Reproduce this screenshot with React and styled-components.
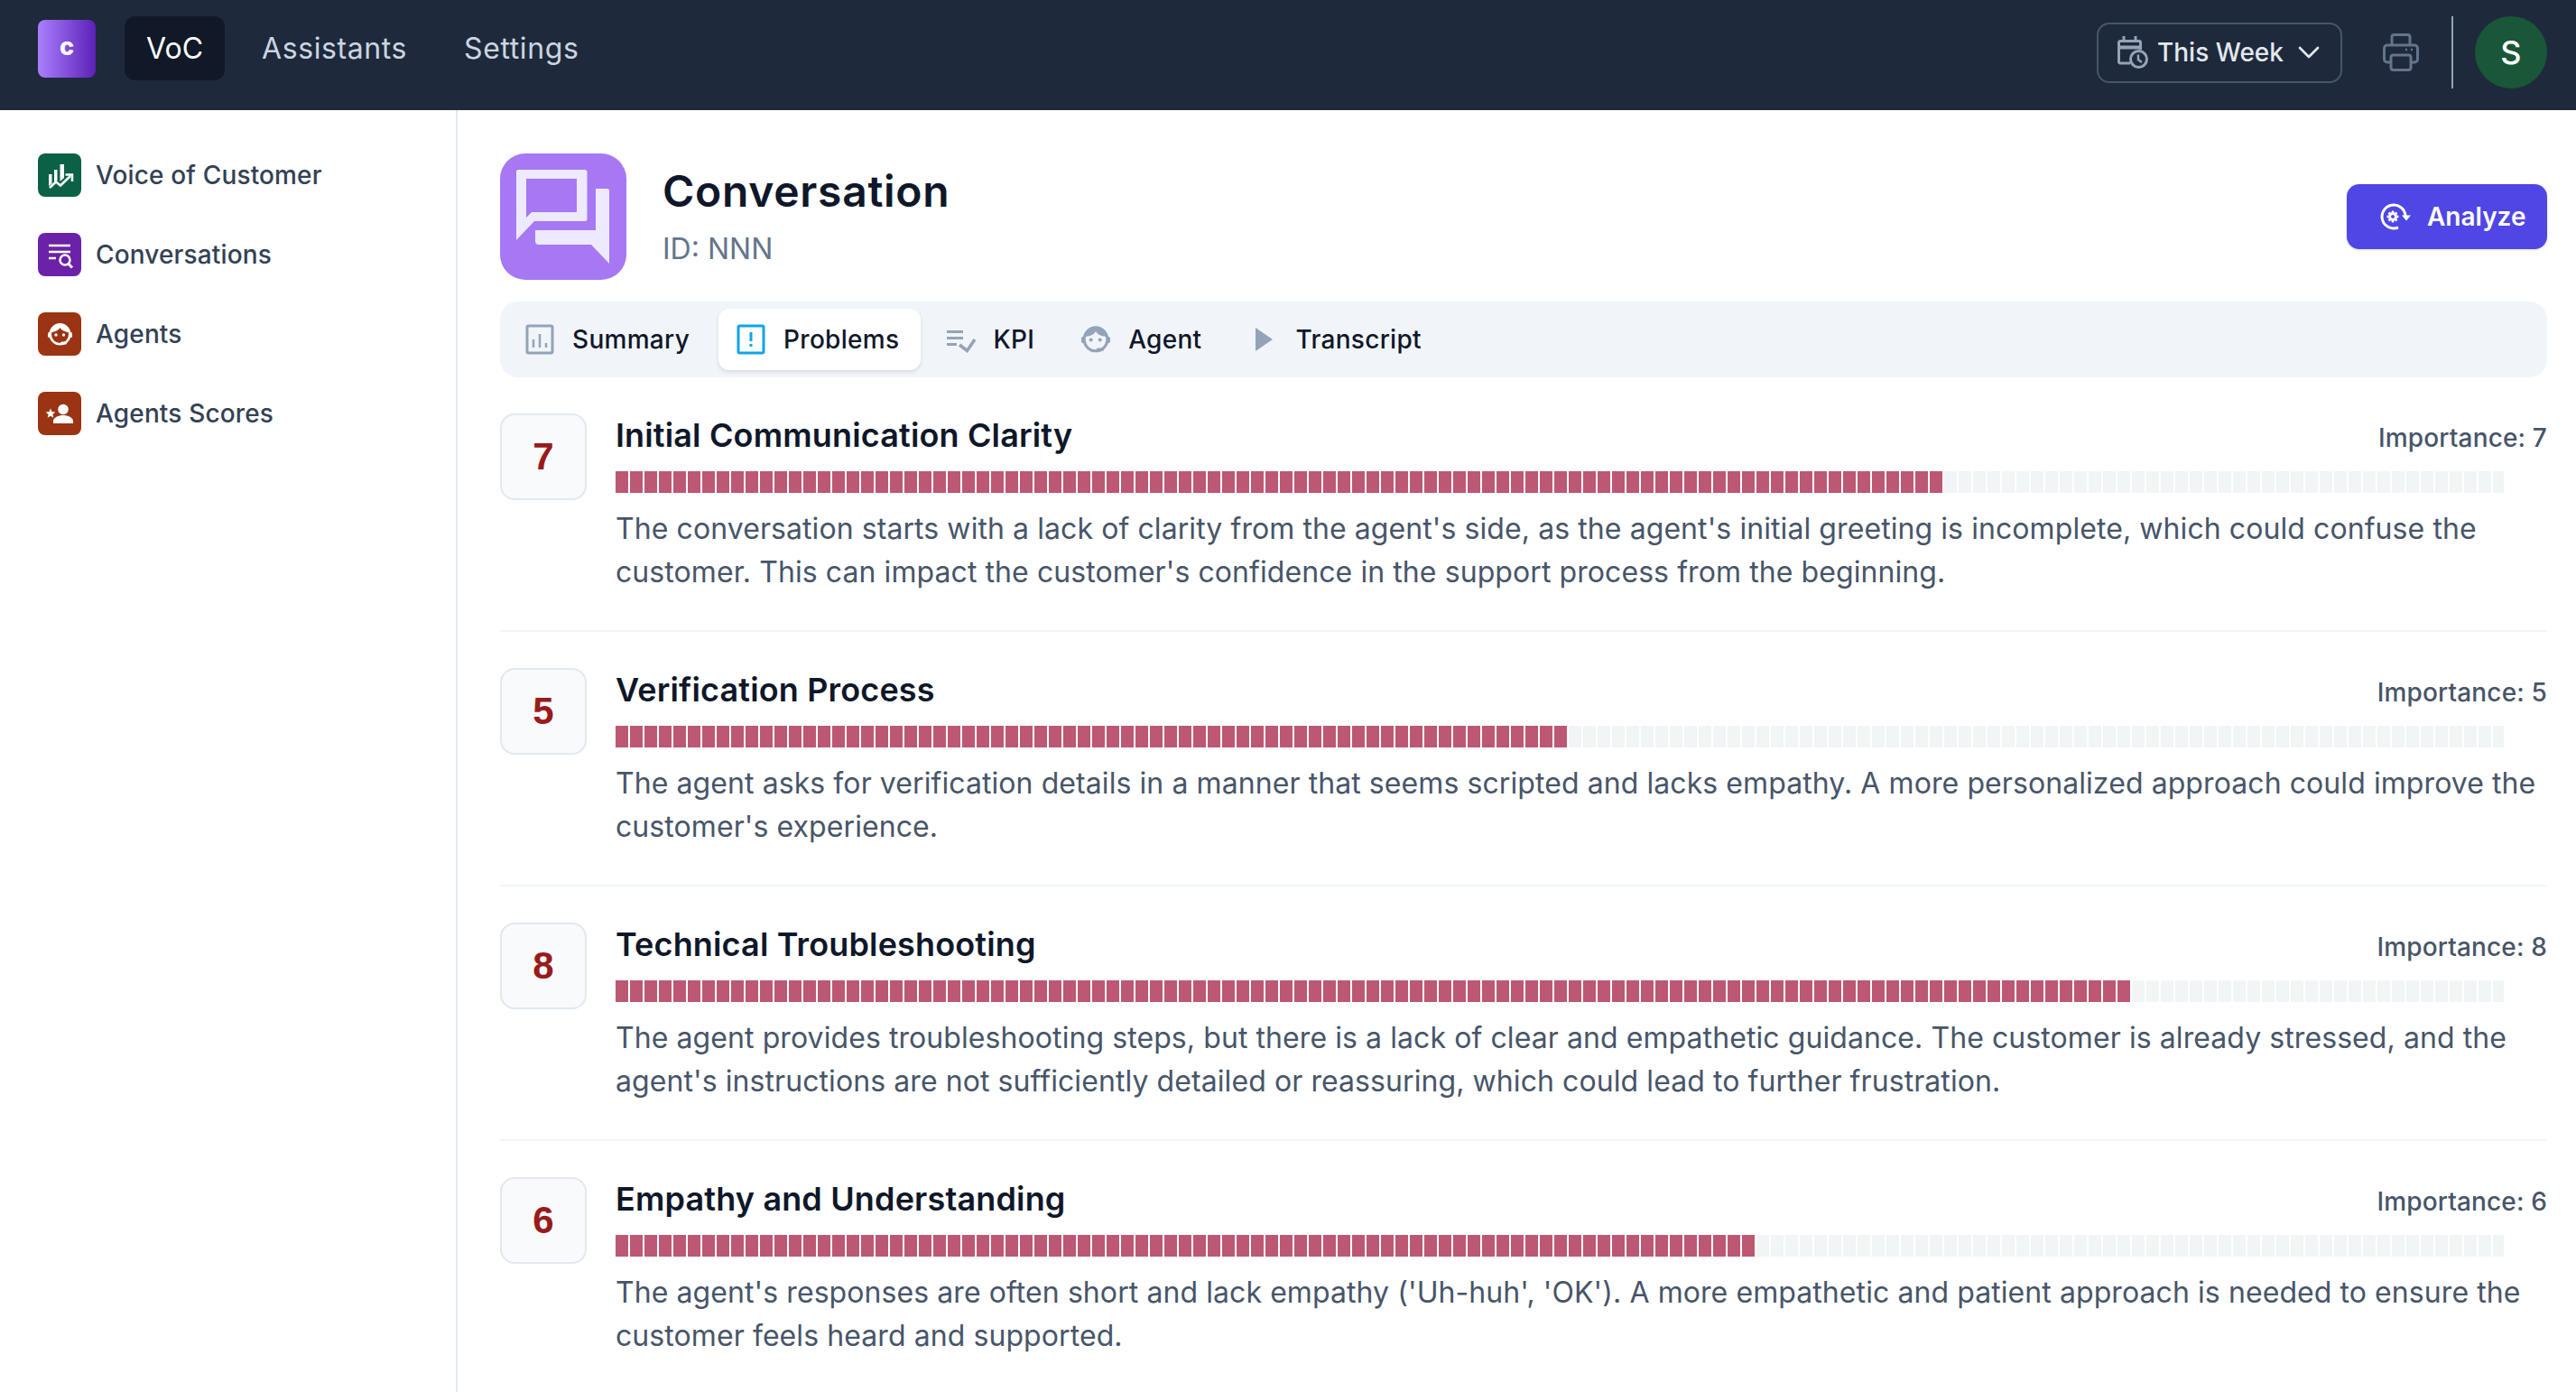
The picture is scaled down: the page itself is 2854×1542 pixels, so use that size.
import styled, { createGlobalStyle } from 'styled-components';
import { ChevronDown } from 'lucide-react';

const SEGMENT = 16;
const METER_WIDTH = 2092;

const GlobalStyle = createGlobalStyle`
  html, body {
    margin: 0;
    height: 100%;
    overflow: hidden;
    background: #fff;
    font-family: Inter, "Noto Sans", sans-serif;
  }
  * {
    box-sizing: border-box;
  }
`;

const Page = styled.div`
  display: flex;
  flex-direction: column;
  height: 100vh;
  overflow: hidden;
`;

const TopBar = styled.header`
  display: flex;
  justify-content: space-between;
  align-items: flex-start;
  flex: none;
  height: 122px;
  padding: 18px 32px 0 42px;
  background: #1e293b;
`;

const TopLeft = styled.div`
  display: flex;
  align-items: center;
  height: 71px;
`;

const Logo = styled.div`
  display: flex;
  align-items: center;
  justify-content: center;
  width: 64px;
  height: 64px;
  margin-right: 32px;
  padding-bottom: 5px;
  border-radius: 8px;
  background: linear-gradient(90deg, #a97ffd, #5b21b6);
  color: #fff;
  font-size: 27px;
  font-weight: 800;
`;

const NavItem = styled.a`
  display: flex;
  align-items: center;
  height: 71px;
  margin-right: ${(p) => (p.$active ? '17px' : '15px')};
  padding: 0 24px;
  border-radius: 12px;
  background: ${(p) => (p.$active ? '#111827' : 'transparent')};
  color: ${(p) => (p.$active ? '#fff' : '#cbd5e1')};
  font-size: 32px;
  letter-spacing: ${(p) => (p.$active ? '0' : '0.6px')};
`;

const TopRight = styled.div`
  display: flex;
  align-items: center;
  height: 80px;
`;

const RangeButton = styled.button`
  display: flex;
  align-items: center;
  width: 272px;
  height: 67px;
  padding: 0 0 0 21px;
  border: 2px solid #475569;
  border-radius: 14px;
  background: transparent;
  color: #e2e8f0;
  font-family: inherit;
  font-size: 28px;
  font-weight: 500;

  span {
    margin: 0 8px 0 10px;
  }
`;

const PrintIcon = styled.svg`
  width: 40px;
  height: 42px;
  margin: 0 36px 0 45px;
`;

const Divider = styled.div`
  width: 2px;
  height: 80px;
  margin-right: 24px;
  background: #94a3b8;
`;

const Avatar = styled.div`
  display: flex;
  align-items: center;
  justify-content: center;
  width: 80px;
  height: 80px;
  border-radius: 50%;
  background: #1a5638;
  color: #fff;
  font-size: 36px;
  font-weight: 500;
`;

const Body = styled.div`
  display: flex;
  flex: 1;
  min-height: 0;
`;

const Sidebar = styled.aside`
  display: flex;
  flex-direction: column;
  gap: 40px;
  flex: none;
  width: 507px;
  padding: 48px 0 0 42px;
  border-right: 2px solid #e2e8f0;
`;

const SideItem = styled.a`
  display: flex;
  align-items: center;
  gap: 16px;
  height: 48px;
  color: #334155;
  font-size: 28px;
  font-weight: 550;
  letter-spacing: 0.15px;
`;

const SideIcon = styled.div`
  display: flex;
  width: 48px;
  height: 48px;
  border-radius: 8px;
  background: ${(p) => p.$bg};
  color: #fff;
`;

const Main = styled.main`
  flex: 1;
  min-width: 0;
  padding: 48px 32px 0 47px;
`;

const TitleRow = styled.div`
  display: flex;
  align-items: flex-start;
  gap: 40px;
  height: 140px;
`;

const BigIcon = styled.div`
  flex: none;
  width: 140px;
  height: 140px;
  border-radius: 28px;
  background: #a678f3;
  color: #ede9fe;
`;

const TitleBlock = styled.div`
  flex: 1;
  padding-top: 12px;
`;

const Title = styled.h1`
  margin: 0;
  color: #0f172a;
  font-size: 48px;
  font-weight: 600;
  line-height: 60px;
  letter-spacing: 0.7px;
`;

const SubTitle = styled.div`
  margin-top: 15px;
  color: #64748b;
  font-size: 32px;
  line-height: 38px;
`;

const AnalyzeButton = styled.button`
  display: flex;
  align-items: center;
  gap: 17px;
  width: 222px;
  height: 72px;
  margin-top: 34px;
  padding: 0 0 0 36px;
  border: 0;
  border-radius: 14px;
  background: #4f46e5;
  box-shadow: 0 1px 3px rgba(15, 23, 42, 0.15);
  color: #fff;
  font-family: inherit;
  font-size: 28px;
  font-weight: 600;
`;

const Tabs = styled.div`
  display: flex;
  gap: 8px;
  height: 84px;
  margin-top: 24px;
  padding: 8px;
  border-radius: 20px;
  background: #f1f5f9;
`;

const Tab = styled.div`
  display: flex;
  align-items: center;
  gap: 20px;
  height: 68px;
  padding: 0 24px 0 20px;
  border-radius: 12px;
  background: ${(p) => (p.$active ? '#fff' : 'transparent')};
  box-shadow: ${(p) => (p.$active ? '0 2px 4px rgba(15, 23, 42, 0.12)' : 'none')};
  color: #0f172a;
  font-size: 28px;
  font-weight: 550;
  letter-spacing: 0.3px;
`;

const TabIcon = styled.svg`
  flex: none;
  width: 32px;
  height: 36px;
  overflow: visible;
  color: ${(p) => (p.$active ? '#0ea5e9' : '#94a3b8')};
`;

const Problem = styled.section`
  display: flex;
  gap: 32px;
  padding: 40px 0;
  border-bottom: 2px solid #f1f5f9;
`;

const Score = styled.div`
  display: flex;
  align-items: center;
  justify-content: center;
  flex: none;
  width: 96px;
  height: 96px;
  border: 2px solid #e2e8f0;
  border-radius: 16px;
  background: #f8fafc;
  color: #991b1b;
  font-family: "Liberation Sans", sans-serif;
  font-size: 42px;
  font-weight: 700;
`;

const ProblemBody = styled.div`
  flex: 1;
  min-width: 0;
`;

const ProblemHead = styled.div`
  display: flex;
  justify-content: space-between;
  align-items: center;
  height: 48px;
`;

const ProblemTitle = styled.h2`
  margin: 0;
  color: #0f172a;
  font-size: 36px;
  font-weight: 600;
  letter-spacing: 0.15px;
`;

const Importance = styled.div`
  padding-top: 6px;
  color: #475569;
  font-size: 28px;
  font-weight: 550;
  letter-spacing: 0.15px;
`;

const Meter = styled.div`
  width: ${METER_WIDTH}px;
  height: 24px;
  margin-top: 16px;
  background: repeating-linear-gradient(90deg, #f1f5f6 0 14px, transparent 14px ${SEGMENT}px);
`;

// the fill always stops on a whole segment
const MeterFill = styled.div`
  width: ${(p) => Math.ceil((METER_WIDTH * p.$value) / 10 / SEGMENT) * SEGMENT - 2}px;
  height: 100%;
  background: repeating-linear-gradient(90deg, #bc5873 0 14px, transparent 14px ${SEGMENT}px);
`;

const Description = styled.p`
  margin: 16px 0 0;
  color: #475569;
  font-size: 32px;
  line-height: 48px;
  letter-spacing: 0.08px;
`;

const problems = [
  {
    score: 7,
    title: 'Initial Communication Clarity',
    text: "The conversation starts with a lack of clarity from the agent's side, as the agent's initial greeting is incomplete, which could confuse the customer. This can impact the customer's confidence in the support process from the beginning.",
  },
  {
    score: 5,
    title: 'Verification Process',
    text: "The agent asks for verification details in a manner that seems scripted and lacks empathy. A more personalized approach could improve the customer's experience.",
  },
  {
    score: 8,
    title: 'Technical Troubleshooting',
    text: "The agent provides troubleshooting steps, but there is a lack of clear and empathetic guidance. The customer is already stressed, and the agent's instructions are not sufficiently detailed or reassuring, which could lead to further frustration.",
  },
  {
    score: 6,
    title: 'Empathy and Understanding',
    text: "The agent's responses are often short and lack empathy ('Uh-huh', 'OK'). A more empathetic and patient approach is needed to ensure the customer feels heard and supported.",
  },
];

const AgentFace = () => (
  <>
    <circle cx="24.500" cy="24.500" r="10.800" fill="none" stroke="currentColor" strokeWidth="2.600" />
    <path
      fill="currentColor"
      d="M14 22c0-6 5-10 10.500-10S35 16 35 22c-4 0-8.500-1.500-10.500-5-2 3.500-6.500 5-10.500 5z"
    />
    <rect x="11" y="22" width="3" height="6" rx="1.500" fill="currentColor" />
    <rect x="35" y="22" width="3" height="6" rx="1.500" fill="currentColor" />
    <circle cx="20" cy="25" r="1.700" fill="currentColor" />
    <circle cx="28.500" cy="25" r="1.700" fill="currentColor" />
    <rect x="25" y="32.500" width="7" height="3" rx="1.500" fill="currentColor" />
  </>
);

function App() {
  return (
    <Page>
      <GlobalStyle />
      <TopBar>
        <TopLeft>
          <Logo>c</Logo>
          <NavItem $active>VoC</NavItem>
          <NavItem>Assistants</NavItem>
          <NavItem>Settings</NavItem>
        </TopLeft>
        <TopRight>
          <RangeButton>
            <svg width="34" height="38" viewBox="0 0 34 38" fill="none" stroke="#94a3b8" strokeWidth="3">
              <path d="M14 31H3a1.500 1.500 0 0 1-1.500-1.500V8A1.500 1.500 0 0 1 3 6.500h21A1.500 1.500 0 0 1 25.500 8v8" />
              <path d="M2 13.500h23" strokeWidth="4" />
              <path d="M7 1v6M20 1v6" />
              <circle cx="23.500" cy="26.500" r="9" fill="#1e293b" />
              <path d="M23 21.500v5.500l4 3" strokeWidth="2.500" />
            </svg>
            <span>This Week</span>
            <ChevronDown size={40} color="#e2e8f0" strokeWidth={1.6} />
          </RangeButton>
          <PrintIcon viewBox="0 0 40 42" fill="none" stroke="#64748b" strokeWidth="3">
            <path d="M10 13V4a2.500 2.500 0 0 1 2.500-2.500h15A2.500 2.500 0 0 1 30 4v9" />
            <path d="M9 32H5a3.500 3.500 0 0 1-3.500-3.500v-12A3.500 3.500 0 0 1 5 13h30a3.500 3.500 0 0 1 3.500 3.500v12A3.500 3.500 0 0 1 35 32h-4" />
            <rect x="9" y="24" width="22" height="16.500" rx="2.500" />
            <path d="M25 18h2M31 18h2" strokeWidth="2.500" />
          </PrintIcon>
          <Divider />
          <Avatar>S</Avatar>
        </TopRight>
      </TopBar>
      <Body>
        <Sidebar>
          <SideItem>
            <SideIcon $bg="#0b6146">
              <svg viewBox="0 0 48 48" fill="none">
                <path fill="#fff" d="M12 23h3.500v10.500L12 36zM18 18h3.500v12L18 32zM24.500 12H29v15l-4.500 4z" />
                <path d="M13 38l7-6.500 5 4L36 25" stroke="#fff" strokeWidth="2.500" />
                <path d="M30.500 23.500H38V31" stroke="#fff" strokeWidth="2.500" />
              </svg>
            </SideIcon>
            Voice of Customer
          </SideItem>
          <SideItem>
            <SideIcon $bg="#6b21a8">
              <svg viewBox="0 0 48 48" fill="none" stroke="#fff" strokeWidth="2.500">
                <path d="M12 14h24M12 21h24M12 28h8" />
                <circle cx="30" cy="30" r="5.500" />
                <path d="M34 34.500l4 4" strokeWidth="3" />
              </svg>
            </SideIcon>
            Conversations
          </SideItem>
          <SideItem>
            <SideIcon $bg="#9a3412">
              <svg viewBox="0 0 48 48">
                <AgentFace />
              </svg>
            </SideIcon>
            Agents
          </SideItem>
          <SideItem>
            <SideIcon $bg="#9a3412">
              <svg viewBox="0 0 48 48" fill="#fff">
                <circle cx="28" cy="19.500" r="5.800" />
                <path d="M17 35v-2.500c0-4 6-6.500 11-6.500s11 2.500 11 6.500V35z" />
                <path d="M14 18.500l1.500 3.600 3.800.3-2.900 2.500.9 3.800-3.300-2-3.300 2 .9-3.800-2.900-2.500 3.800-.3z" />
              </svg>
            </SideIcon>
            Agents Scores
          </SideItem>
        </Sidebar>
        <Main>
          <TitleRow>
            <BigIcon>
              <svg viewBox="0 0 140 140" width="140" height="140">
                <path
                  fill="currentColor"
                  fillRule="evenodd"
                  d="M20 18h74a2.500 2.500 0 0 1 2.500 2.500V72.500a2.500 2.500 0 0 1-2.500 2.500H38L18 96V20a2 2 0 0 1 2-2zM29 28v43l6-6h50V28z"
                />
                <path
                  fill="currentColor"
                  d="M106 39h13a2 2 0 0 1 2 2v81l-20-21H43a4 4 0 0 1-4-4V85h67z"
                />
              </svg>
            </BigIcon>
            <TitleBlock>
              <Title>Conversation</Title>
              <SubTitle>ID: NNN</SubTitle>
            </TitleBlock>
            <AnalyzeButton>
              <svg width="36" height="32" viewBox="0 0 36 32" fill="none">
                <path d="M29 15A13 13 0 1 0 21 28" stroke="#fff" strokeWidth="3" />
                <path d="M25 14.500h10l-5 6z" fill="#fff" />
                <circle cx="15" cy="16" r="3.500" stroke="#fff" strokeWidth="3" />
                <path d="M15 9.500v2M15 20.500v2M8.500 16h2M19.500 16h2M10.500 11.500l1.500 1.500M18 19l1.500 1.500M19.500 11.500L18 13M12 19l-1.500 1.500" stroke="#fff" strokeWidth="2.500" />
              </svg>
              Analyze
            </AnalyzeButton>
          </TitleRow>
          <Tabs>
            <Tab>
              <TabIcon viewBox="0 0 32 36" fill="none" stroke="currentColor">
                <rect x="2" y="3" width="28" height="30" rx="1.500" strokeWidth="3" />
                <path d="M9 27v-9M16 27V12M23 27v-5" strokeWidth="2.500" />
              </TabIcon>
              Summary
            </Tab>
            <Tab $active>
              <TabIcon $active viewBox="0 0 32 36" fill="none" stroke="currentColor">
                <rect x="2" y="3" width="28" height="30" rx="1.500" strokeWidth="3" />
                <path d="M16 10v10M16 23v3" strokeWidth="3" />
              </TabIcon>
              Problems
            </Tab>
            <Tab>
              <TabIcon viewBox="0 0 32 36" fill="none" stroke="currentColor" strokeWidth="3.200">
                <path d="M1 9.500h18M1 16.500h18M1 23.500h11" />
                <path d="M15 24l8.500 6.500L32 18" strokeWidth="3.500" />
              </TabIcon>
              KPI
            </Tab>
            <Tab>
              <TabIcon viewBox="11 11 27 27">
                <AgentFace />
              </TabIcon>
              Agent
            </Tab>
            <Tab>
              <TabIcon viewBox="0 0 32 36" fill="currentColor">
                <path d="M8 5l19 13L8 31z" />
              </TabIcon>
              Transcript
            </Tab>
          </Tabs>
          {problems.map((item) => (
            <Problem key={item.title}>
              <Score>{item.score}</Score>
              <ProblemBody>
                <ProblemHead>
                  <ProblemTitle>{item.title}</ProblemTitle>
                  <Importance>Importance: {item.score}</Importance>
                </ProblemHead>
                <Meter>
                  <MeterFill $value={item.score} />
                </Meter>
                <Description>{item.text}</Description>
              </ProblemBody>
            </Problem>
          ))}
        </Main>
      </Body>
    </Page>
  );
}

export default App;
